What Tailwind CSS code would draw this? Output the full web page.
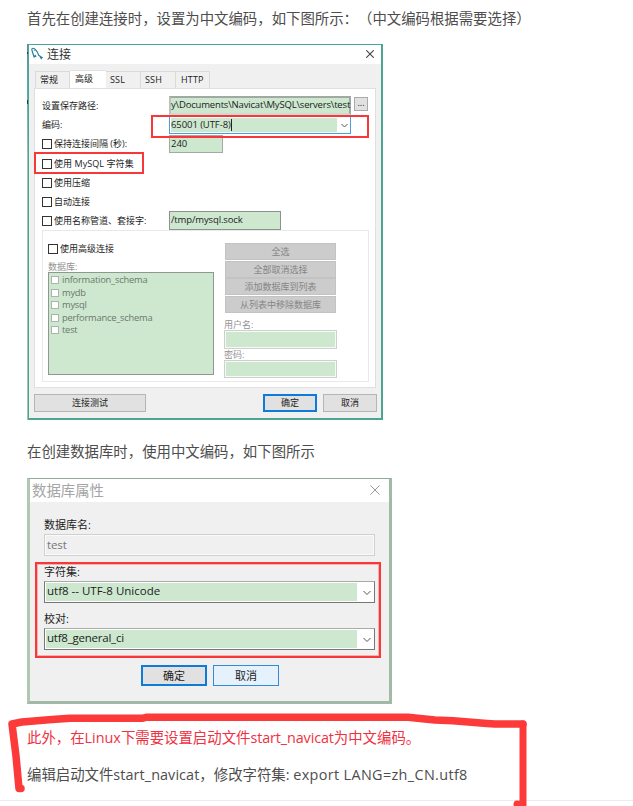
<!DOCTYPE html>
<html lang="zh-CN">
<head>
<meta charset="utf-8">
<title>Navicat 中文编码设置</title>
<script src="https://cdn.jsdelivr.net/npm/@tailwindcss/browser@4"></script>
</head>
<body class="relative w-[633px] h-[806px] overflow-hidden bg-white text-[#4d4d4d] font-['Open_Sans','Noto_Sans_CJK_SC',sans-serif] whitespace-nowrap [text-spacing-trim:space-all]">
<main class="flex flex-col items-start pl-[27px]">
  <p class="h-[44px] leading-[38px] text-[14.4px]">首先在创建连接时，设置为中文编码，如下图所示：（中文编码根据需要选择）</p>

  <!-- 连接 -->
  <section class="relative w-[356px] h-[376px] bg-[#f0f0f0] border-t border-b-2 border-r-2 border-l-2 border-[#4ba592] text-[9px] leading-[12px] text-[#1c1c1c]">
    <div class="absolute -left-[2px] -top-px w-px h-[376px] bg-linear-to-b from-[#57939c] via-[#68aeb2] via-15% to-[#a4c0b1] to-30%"></div>
    <div class="absolute -left-[2px] top-[7px] w-px h-[2px] bg-[#263e46]"></div>
    <div class="absolute -left-[2px] top-[55px] w-px h-[4px] bg-[#263e46]"></div>
    <header class="flex items-center h-[19px] bg-white pl-[2px] pr-[7px]">
      <svg class="w-[12px] h-[13px] -mt-[2px]" viewBox="0 0 12 13" fill="none" stroke="#2b7d9b" stroke-width="1.2"><path d="M3.2 10.5C2.8 8.5 1.2 5 .8 2.4.8.8 2.6 1 4 2.2c2.3 1.700 2.900 3.900 3.700 6.100l3.300 2.200-1.400.2 1.200 1.500M3.200 10.500l1-2 1 1.200M3.100 3.300l.4.5"/></svg>
      <span class="ml-[4px] text-[12px] leading-[19px] text-[#333]">连接</span>
      <svg class="ml-auto -mt-[2px] w-[8px] h-[8px]" viewBox="0 0 8 8" stroke="#444" stroke-width="1.1"><path d="M.3.3l7.400 7.400M7.700.3L.3 7.700"/></svg>
    </header>
    <nav class="flex items-end h-[24px] pl-[6px]">
      <div class="w-[35px] h-[17px] border border-b-0 border-[#dadada] pl-[4px] leading-[16px]">常规</div>
      <div class="w-[36px] h-[18px] bg-white border-t border-[#e2e2e2] pl-[5px] leading-[15px]">高级</div>
      <div class="w-[35px] h-[17px] border border-l-0 border-b-0 border-[#dadada] pl-[4px] leading-[16px] tracking-[.15px]">SSL</div>
      <div class="w-[35px] h-[17px] border border-l-0 border-b-0 border-[#dadada] pl-[4px] leading-[16px] tracking-[.15px]">SSH</div>
      <div class="w-[34px] h-[17px] border border-l-0 border-b-0 border-[#dadada] pl-[5px] leading-[16px] tracking-[.15px]">HTTP</div>
    </nav>
    <div class="ml-[5px] w-[342px] h-[300px] bg-white border border-[#dfdfdf] pl-[7px] pt-[7px]">
      <div class="flex h-[20px]">
        <span class="w-[127px] leading-[19px]">设置保存路径:</span>
        <span class="w-[182px] h-[19px] bg-[#cde8cf] border-2 border-[#a2a8a3] border-b-[#cfd8d0] border-l-[#bac4bb] leading-[14px] text-[9.5px] tracking-[-.17px]">y\Documents\Navicat\MySQL\servers\test</span>
        <span class="ml-[3px] mt-px w-[14px] h-[14px] bg-[#e1e1e1] border border-[#aaa] text-center leading-[10px]">...</span>
      </div>
      <div class="flex h-[19px]">
        <span class="w-[127px] leading-[18px]">编码:</span>
        <span class="flex w-[182px] h-[18px] bg-white border border-[#4b9fe0] p-px">
          <span class="w-[166px] bg-[#cde8cf] leading-[14px] text-[9.5px]"><span class="inline-block h-[12px] leading-[12px] border-r border-[#222] tracking-[-.08px]">65001 (UTF-8)</span></span>
          <svg class="ml-[4px] mt-[5px] w-[7px] h-[6px]" viewBox="0 0 7 6" fill="none" stroke="#555"><path d="M.5 1l3 3 3-3"/></svg>
        </span>
      </div>
      <div class="flex h-[19px]">
        <span class="flex items-center h-[18px] w-[127px] gap-[2px]"><i class="w-[10px] h-[10px] border border-[#333] bg-white"></i>保持连接间隔 (秒):</span>
        <span class="w-[54px] h-[18px] bg-[#cde8cf] border border-[#a2aaa3] leading-[15px] pl-px text-[9.5px]">240</span>
      </div>
      <div class="flex items-center h-[19px] gap-[2px] tracking-[.07px]"><i class="w-[10px] h-[10px] border border-[#333] bg-white"></i>使用 MySQL 字符集</div>
      <div class="flex items-center h-[19px] gap-[2px]"><i class="w-[10px] h-[10px] border border-[#333] bg-white"></i>使用压缩</div>
      <div class="flex items-center h-[19px] gap-[2px]"><i class="w-[10px] h-[10px] border border-[#333] bg-white"></i>自动连接</div>
      <div class="flex h-[19px]">
        <span class="flex items-center h-[19px] w-[127px] gap-[2px]"><i class="w-[10px] h-[10px] border border-[#333] bg-white"></i>使用名称管道、套接字:</span>
        <span class="w-[112px] h-[19px] bg-[#cde8cf] border border-[#8b938c] leading-[16px] pl-px text-[9.5px] tracking-[-.13px]">/tmp/mysql.sock</span>
      </div>
      <div class="flex w-[327px] h-[152px] border border-[#e9e9e9] pl-[5px]">
        <div class="w-[176px] pt-[11px]">
          <div class="flex items-center gap-[2px] h-[13px]"><i class="w-[10px] h-[10px] border border-[#333] bg-white"></i>使用高级连接</div>
          <div class="h-[17px] leading-[23px] text-[#929292]">数据库:</div>
          <div class="w-[166px] h-[103px] bg-[#cde8cf] border border-[#8e9890] pt-[1px] pl-[2px] text-[#6c766d] text-[9.3px] tracking-[-.2px]">
            <div class="flex items-center h-[12.5px] gap-[3px]"><i class="w-[8px] h-[8px] border border-[#aab5ac] bg-white"></i>information_schema</div>
            <div class="flex items-center h-[12.5px] gap-[3px]"><i class="w-[8px] h-[8px] border border-[#aab5ac] bg-white"></i>mydb</div>
            <div class="flex items-center h-[12.5px] gap-[3px]"><i class="w-[8px] h-[8px] border border-[#aab5ac] bg-white"></i>mysql</div>
            <div class="flex items-center h-[12.5px] gap-[3px]"><i class="w-[8px] h-[8px] border border-[#aab5ac] bg-white"></i>performance_schema</div>
            <div class="flex items-center h-[12.5px] gap-[3px]"><i class="w-[8px] h-[8px] border border-[#aab5ac] bg-white"></i>test</div>
          </div>
        </div>
        <div class="w-[113px] pt-[12px] text-[#929292]">
          <div class="flex flex-col gap-[.67px] px-px text-center leading-[15px] text-[#858585]">
            <div class="h-[17px] bg-[#ccc] border border-[#c3c3c3]">全选</div>
            <div class="h-[17px] bg-[#ccc] border border-[#c3c3c3]">全部取消选择</div>
            <div class="h-[17px] bg-[#ccc] border border-[#c3c3c3]">添加数据库到列表</div>
            <div class="h-[17px] bg-[#ccc] border border-[#c3c3c3]">从列表中移除数据库</div>
          </div>
          <div class="h-[17px] leading-[23px]">用户名:</div>
          <div class="h-[19px] bg-[#cde8cf] border border-[#cfcfcf] shadow-[inset_0_0_0_1px_#f4fbf4]"></div>
          <div class="h-[11px] leading-[11px]">密码:</div>
          <div class="h-[18px] bg-[#cde8cf] border border-[#cfcfcf] shadow-[inset_0_0_0_1px_#f4fbf4]"></div>
        </div>
      </div>
    </div>
    <footer class="flex pt-[6px] pl-[5px] text-center leading-[16px]">
      <div class="w-[112px] h-[18px] bg-[#e1e1e1] border border-[#b5b5b5]">连接测试</div>
      <div class="ml-[117px] w-[54px] h-[18px] bg-[#e1e1e1] border-2 border-[#0f7bd8] leading-[14px]">确定</div>
      <div class="ml-[6px] w-[54px] h-[18px] bg-[#e1e1e1] border border-[#b5b5b5]">取消</div>
    </footer>
    <div class="absolute left-[122px] top-[70px] w-[218px] h-[23px] border-2 border-[#f83838]"></div>
    <div class="absolute left-[5px] top-[107px] w-[110px] h-[22px] border-2 border-[#f83838]"></div>
  </section>

  <p class="h-[58px] pt-[13px] leading-[38px] text-[14.4px]">在创建数据库时，使用中文编码，如下图所示</p>

  <!-- 数据库属性 -->
  <section class="relative w-[365px] h-[226px] bg-[#f0f0f0] border-t border-r-[3px] border-b-[3px] border-l-[3px] border-t-[#91aa98] border-l-[#afc8b4] border-r-[#a3b9a7] border-b-[#a3b9a7] text-[11px] text-[#1c1c1c]">
    <header class="flex items-center h-[23px] bg-white pl-[2px] pr-[9px]">
      <span class="text-[14.4px] leading-[23px] text-[#a5a5a5]">数据库属性</span>
      <svg class="ml-auto -mt-[2px] w-[10px] h-[10px]" viewBox="0 0 10 10" stroke="#999" stroke-width="1"><path d="M.4.4l9.200 9.200M9.600.4L.4 9.600"/></svg>
    </header>
    <div class="pl-[14px] pt-[12px]">
      <div class="h-[20px] leading-[21px]">数据库名:</div>
      <div class="w-[331px] h-[22px] border border-[#d0d0d0] shadow-[inset_0_0_0_1px_#fafafa] pl-[2px] leading-[19px] text-[#777] text-[11.500px] tracking-[-.1px]">test</div>
      <div class="h-[25px] leading-[31px]">字符集:</div>
      <div class="flex w-[331px] h-[22px] bg-white border border-[#777] border-t-[#aaa] p-px pt-[1px]">
        <span class="w-[311px] pl-px bg-[#cde8cf] leading-[16px] text-[11.5px]">utf8 -- UTF-8 Unicode</span>
        <svg class="ml-[6px] mt-[7px] w-[8px] h-[6px]" viewBox="0 0 8 6" fill="none" stroke="#555"><path d="M.5 1L4 4.500 7.500 1"/></svg>
      </div>
      <div class="h-[25px] leading-[31px]">校对:</div>
      <div class="flex w-[331px] h-[22px] bg-white border border-[#777] border-t-[#aaa] p-px pt-[1px]">
        <span class="w-[311px] pl-px bg-[#cde8cf] leading-[16px] text-[11.5px] tracking-[-.23px]">utf8_general_ci</span>
        <svg class="ml-[6px] mt-[7px] w-[8px] h-[6px]" viewBox="0 0 8 6" fill="none" stroke="#555"><path d="M.5 1L4 4.500 7.500 1"/></svg>
      </div>
      <div class="flex gap-[6px] pt-[15px] pl-[97px] text-center">
        <div class="w-[66px] h-[21px] bg-[#e1e1e1] border-2 border-[#0f7bd8] leading-[18px]">确定</div>
        <div class="w-[66px] h-[21px] bg-[#e5f1fb] border border-[#2f8cda] leading-[20px]">取消</div>
      </div>
    </div>
    <div class="absolute left-[5px] top-[83px] w-[346px] h-[96px] border-2 border-[#f83838] shadow-[inset_0_0_0_1px_#f5b0b0]"></div>
  </section>

  <p class="h-[53px] pt-[15px] leading-[38px] text-[14.4px] text-[#f03142]">此外，在Linux下需要设置启动文件<span class="tracking-[-.12px]">start_navicat</span>为中文编码。</p>
  <p class="h-[43px] leading-[36px] text-[14.4px]">编辑启动文件<span class="tracking-[.08px]">start_navicat</span>，修改字符集: <span class="tracking-[.36px]">export LANG=zh_CN.utf8</span></p>
  <hr class="-ml-[27px] w-[633px] border-t border-[#ececec]">
</main>
<svg class="absolute left-0 top-0 w-[633px] h-[806px] pointer-events-none" viewBox="0 0 633 806" fill="none" stroke="#fc3a3a" stroke-linecap="round" stroke-linejoin="round"><path stroke-width="7.500" d="M21 788.500H19L16 756 12 724 22 722 52 719.500 70 718.300H142L147 717.200H408L420 718.500 435 720 453 720.800 487 723.500 495 724H523"/><path stroke-width="7" d="M523 724v82M517 804l6 1"/></svg>
</body>
</html>
